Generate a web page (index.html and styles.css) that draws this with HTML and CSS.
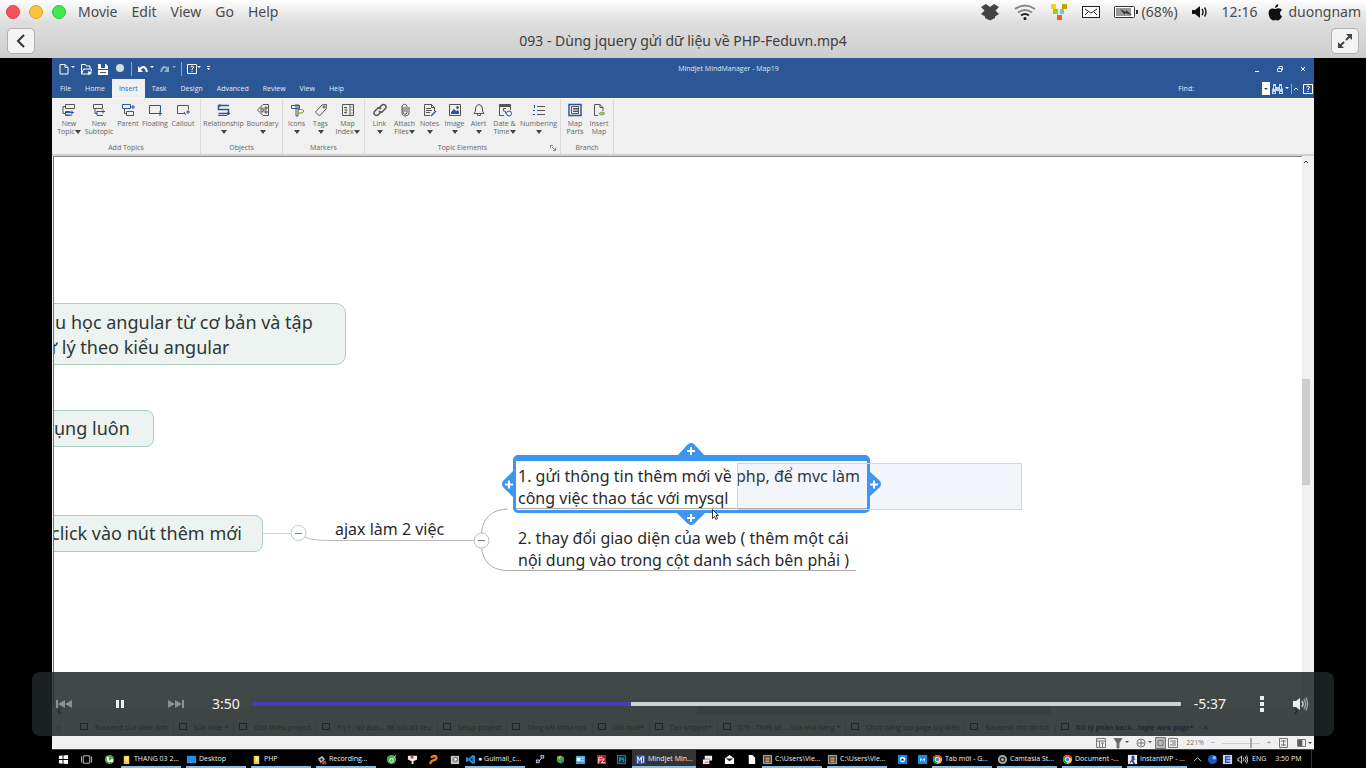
FILE: index.html
```html
<!DOCTYPE html>
<html lang="vi">
<head>
<meta charset="utf-8">
<title>093 - Dùng jquery gửi dữ liệu về PHP-Feduvn.mp4</title>
<link rel="stylesheet" href="styles.css">
</head>
<body>
<header class="menubar">
  <div class="lights"><button class="light close" aria-label="Close"></button><button class="light minimize" aria-label="Minimize"></button><button class="light maximize" aria-label="Zoom"></button></div>
  <nav class="menus"><button>Movie</button><button>Edit</button><button>View</button><button>Go</button><button>Help</button></nav>
  <div class="indicators">
    <svg width="20" height="18" viewBox="0 0 20 18"><path fill="#444" d="M6 1l4 3 4-3 5 3-3.500 3.500L19 11l-4 2.500v1.500l-5 2.500-5-2.500v-1.500L1 11l3.500-3.500L1 4z"/></svg>
    <svg width="22" height="16" viewBox="0 0 22 16" fill="none" stroke-width="2"><path stroke="#888" d="M1 5q10-7 20 0M4 8.500q7-5 14 0"/><path stroke="#222" d="M7 11.500q4-3 8 0"/><circle cx="11" cy="14.500" r="1.500" fill="#111"/></svg>
    <svg width="18" height="16" viewBox="0 0 18 16"><path fill="none" stroke="#ccc" d="M3 3l6 10 6-10"/><path fill="#fcd116" d="M1 0h5v5H1z"/><path fill="#c8a000" d="M12 0h5v5h-5z"/><path fill="#98cc20" d="M3 5h5v5H3z"/><path fill="#70c4dc" d="M10 5h4v5h-4z"/><path fill="#f26010" d="M7 11h5v5H7z"/></svg>
    <svg width="18" height="12" viewBox="0 0 18 12" fill="#fafafa" stroke="#222"><rect x=".5" y=".5" width="17" height="11"/><path fill="none" d="M3 3l6 4 6-4M3 9l3-3M15 9l-3-3"/></svg>
    <span class="battery"><svg width="24" height="12" viewBox="0 0 24 12"><rect x=".5" y=".5" width="20" height="11" rx="1" fill="#fff" stroke="#333"/><path fill="#999" d="M2 2h15v8H2z"/><path fill="#333" d="M22 4h2v4h-2zM6 3l6 3 0-2 6 5-7-2v2z"/></svg>(68%)</span>
    <svg width="16" height="12" viewBox="0 0 16 12"><path fill="#111" d="M0 4h3l5-4v12L3 8H0z"/><path fill="none" stroke="#222" stroke-width="1.500" d="M10 3q2 3 0 6M12.500 1.500q3 4.500 0 9"/></svg>
    <span>12:16</span>
    <span class="user"><svg width="15" height="17" viewBox="0 0 15 17"><path fill="#111" d="M10 0q1 3-3 4 0-3 3-4zM7.500 5Q12 3 14 6q-4 3 0 6.500Q11 18 8 16q-2 0-3 .5Q1 15 .500 9 1 3 7.500 5z"/></svg>duongnam</span>
  </div>
</header>
<div class="titlebar">
  <button class="tool" aria-label="Back"><svg width="10" height="14" viewBox="0 0 10 14" fill="none" stroke="#333" stroke-width="2"><path d="M8 1L2 7l6 6"/></svg></button>
  <h1>093 - Dùng jquery gửi dữ liệu về PHP-Feduvn.mp4</h1>
  <button class="tool" aria-label="Full screen"><svg width="14" height="14" viewBox="0 0 14 14" fill="#444" stroke="#444" stroke-width="2"><path stroke="none" d="M8 0h6v6zM0 8v6h6z"/><path d="M8 6l4-4M6 8l-4 4"/></svg></button>
</div>

<main class="stage">
  <section class="screen" aria-label="Mindjet MindManager">
    <div class="apphead">
      <div class="quick">
        <button aria-label="New"><svg width="17" height="12" viewBox="0 0 17 12" fill="none" stroke="#fff"><path d="M2 1.500h5l3 3v6.500H2zM7 1.500v3h3"/><path class="w" d="M13 3h4l-2 2z"/></svg></button>
        <button aria-label="Open"><svg width="12" height="12" viewBox="0 0 12 12" fill="none" stroke="#fff"><path d="M1.500 11V1.500h4l1 1.500H10v3M1.500 11l2-5h8l-1 5z"/><path class="w" d="M8 8l4 2-4 2z"/></svg></button>
        <button aria-label="Save"><svg width="12" height="12" viewBox="0 0 12 12"><path class="w" d="M1 1h8l2 2v9H1zM4 1v4h4V1z" fill-rule="evenodd"/><path stroke="#2b5797" d="M1 6.500h10M3 9.500h6"/></svg></button>
        <button aria-label="Record"><svg width="12" height="12" viewBox="0 0 12 12"><circle cx="6" cy="5" r="4" fill="#d0e0d8"/></svg></button>
        <i></i>
        <button aria-label="Undo"><svg width="17" height="12" viewBox="0 0 17 12" fill="none" stroke="#fff" stroke-width="2"><path d="M3 6q5-5 7 3"/><path class="w" stroke="none" d="M1 3v6h5zM13 3h4l-2 2z"/></svg></button>
        <button class="dim" aria-label="Redo"><svg width="17" height="12" viewBox="0 0 17 12" fill="none" stroke="#fff" stroke-width="2"><path d="M2 9q2-8 7-3"/><path class="w" stroke="none" d="M10 3v6H5zM13 3h4l-2 2z"/></svg></button>
        <i></i>
        <button aria-label="Help"><svg width="14" height="12" viewBox="0 0 14 12" fill="none" stroke="#fff"><path d="M.5 1.500h9v9H.5zM3.500 4q1.500-2 3 0 0 1-1.500 2v1M5 8v1"/><path class="w" d="M10 3h4l-2 2z"/></svg></button>
        <button aria-label="More"><svg width="6" height="8" viewBox="0 0 6 8"><path class="w" d="M1 1h3v1H1zM1 3h3L2.500 5z"/></svg></button>
      </div>
      <span class="apptitle">Mindjet MindManager - Map19</span>
      <div class="winbtns">
        <button aria-label="Minimize"><svg width="8" height="8" viewBox="0 0 8 8"><path stroke="#fff" d="M2 6.500h4"/></svg></button>
        <button aria-label="Restore"><svg width="8" height="8" viewBox="0 0 8 8"><path fill="none" stroke="#fff" stroke-width=".8" d="M1.500 3.500h4v3h-4zM3 3V1.500h3.500V5H6"/></svg></button>
        <button aria-label="Close"><svg width="8" height="8" viewBox="0 0 8 8"><path stroke="#fff" d="M2 2l4 4M6 2L2 6"/></svg></button>
      </div>
    </div>
    <div class="tabrow">
      <nav class="tabs"><button>File</button><button>Home</button><button class="on">Insert</button><button>Task</button><button>Design</button><button>Advanced</button><button>Review</button><button>View</button><button>Help</button></nav>
      <div class="find">
        <label for="find">Find:</label><input id="find" type="text">
        <svg width="52" height="14" viewBox="0 0 52 14" fill="none" stroke="#fff"><path fill="#fff" stroke="none" d="M0 0h8v13H0z"/><path fill="#444" stroke="none" d="M2 6h4L4 8z"/><path fill="#c8d6ec" stroke="none" d="M11 2h3v3h3V2h3v4l1 1v5h-4V9h-3v3h-4V7l1-1z"/><path stroke="#2b5797" d="M11 10.500h2M18 10.500h2M12.500 4v3M18.500 4v3"/><path class="w" stroke="none" d="M23 5h4l-2 2z"/><path stroke="#8aa5d0" d="M29.500 2v10"/><path d="M32 8l2-2 2 2M41.500 2.500h9v9h-9zM44.500 5q1.500-2 3 0 0 1-1.500 2v1M46 9v1"/></svg>
      </div>
    </div>
    <div class="ribbon">
      <div class="group g1">
        <div class="btns">
          <button class="w30"><svg viewBox="0 0 14 14"><path d="M3.500 1.500h9v4h-9zM3 3.500H1v7h2M8 12.500H3.500v-4h5"/><path class="b" d="M4 9.500h8M10 7.500v4M4 12h6"/></svg>New<br>Topic<b></b></button>
          <button class="w30"><svg viewBox="0 0 14 14"><path d="M1.500 1.500h9v4h-9zM3 5.500v5h2"/><path class="b" d="M5 8.500h8M11 6.500v4M5 8v4.500h6"/></svg>New<br>Subtopic</button>
          <button class="w28"><svg viewBox="0 0 14 14"><path class="b" d="M1.500 1.500h8v4h-8zM12 2v4M10 4h4"/><path d="M3.500 6v4.500H5M5.500 8.500h7v4h-7z"/></svg>Parent</button>
          <button class="w26"><svg viewBox="0 0 14 14"><path class="b" d="M1.500 2.500h11v7M12 10.500H1.500v-8M12 8v5M10 10.500h4"/></svg>Floating</button>
          <button class="w30"><svg viewBox="0 0 14 14"><path d="M9 10.500H1.500v-8h11v4M8 9l2 3"/><path class="b" d="M12 7v4M10 9h4"/></svg>Callout</button>
        </div><span>Add Topics</span>
      </div>
      <div class="group g2">
        <div class="btns">
          <button class="w42"><svg viewBox="0 0 14 14"><path class="b" stroke-width="1.500" d="M12 2.500H1.500v4h10v4H1.500"/><path d="M3 1v3M10 9l3 1.500-3 1.500M1 12.500h9"/></svg>Relationship<br><b></b></button>
          <button class="w36"><svg viewBox="0 0 14 14"><path d="M12.500 1.500H7L1.500 7 7 12.500h5.500zM5 5h2v4H5zM9 4h2v2H9zM9 8h2v2H9zM7 7h2"/></svg>Boundary<br><b></b></button>
        </div><span>Objects</span>
      </div>
      <div class="group g3">
        <div class="btns">
          <button class="w24"><svg viewBox="0 0 14 14"><path class="b" d="M1.500 2.500h8v3h-8z"/><path d="M6 1v12M8 1v12M6 13h2"/><path class="g" d="M8 6.500h4l2 1.500-2 2H8"/></svg>Icons<br><b></b></button>
          <button class="w24"><svg viewBox="0 0 14 14"><path d="M1.500 9L8 2l4.500-.5L12 6l-6.500 7z"/><circle cx="10" cy="4" r="1"/></svg>Tags<br><b></b></button>
          <button class="w30"><svg viewBox="0 0 14 14"><path d="M1.500 1.500h11v11h-11zM9 2v10M3 4.500h3M3 9.500h3M10.500 4h1M10.500 7h1M10.500 10h1"/><path class="g" d="M3 7h4M5 5v6"/></svg>Map<br>Index<b></b></button>
        </div><span>Markers</span>
      </div>
      <div class="group g4">
        <div class="btns">
          <button class="w26"><svg viewBox="0 0 14 14"><path stroke-width="1.500" d="M6 5l3-3q2-1 3.500.5T12 6L9 9Q7 9.500 6 8M8 9l-3 3q-2 1-3.500-.5T2 8l3-3q2-.5 3 1"/></svg>Link<br><b></b></button>
          <button class="w24"><svg viewBox="0 0 14 14"><path d="M5 4v6q2 3 4 0V3Q7-.5 4 3v8q3 4 7 0V4M7 4v5"/></svg>Attach<br>Files<b></b></button>
          <button class="w26"><svg viewBox="0 0 14 14"><path d="M7 12.500H1.500v-11h7l3 3V8M8.500 1.500v3h3M3 5.500h5M3 7.500h6M3 9.500h4"/><path class="b" stroke-width="1.500" d="M13 8l-5 5"/></svg>Notes<br><b></b></button>
          <button class="w24"><svg viewBox="0 0 14 14"><path d="M1.500 1.500h11v11h-11z"/><path fill="#2b579a" stroke="none" d="M3 11V9l3-3 2 2 2-1 1 2v2z"/><circle cx="9.500" cy="4.500" r="1" fill="#2b579a"/></svg>Image<br><b></b></button>
          <button class="w24"><svg viewBox="0 0 14 14"><path d="M2 10.500h10L10.500 8V5Q10 2 7 1.500 4 2 3.500 5v3zM5.500 11v1.500h3V11"/></svg>Alert<br><b></b></button>
          <button class="w28"><svg viewBox="0 0 14 14"><path d="M6 12.500H1.500v-11h11V7M8 5.500H5.500V8q3-.5 2 2.500"/><path stroke-width="2" d="M1 3h12"/><circle class="b" cx="11" cy="10.500" r="2.500"/></svg>Date &amp;<br>Time<b></b></button>
          <button class="w40"><svg viewBox="0 0 14 14"><path d="M5 3.500h8M5 7.500h8M5 11.500h8"/><path class="b" d="M2.500 2v3M1 7.500h2M1 11.500h2"/></svg>Numbering<br><b></b></button>
        </div><span>Topic Elements</span>
        <svg class="launch" viewBox="0 0 6 6"><path d="M.5 3V.5H3M2 2l3 3M5.500 3v2.500H3"/></svg>
      </div>
      <div class="group g5">
        <div class="btns">
          <button class="w24"><svg viewBox="0 0 14 14"><path class="b" stroke-width="1.500" d="M1 1.500h12v11H1z"/><path d="M3.500 3.500h7v7h-7zM5 5.500h5M5 7h5M5 8.500h5"/></svg>Map<br>Parts</button>
          <button class="w24"><svg viewBox="0 0 14 14"><path d="M6 12.500H2.500v-11H8l3 3V8M8 1.500v3h3"/><path class="g" d="M7 10.500q3-3 6 0-3 3-6 0zM10 10v1"/></svg>Insert<br>Map</button>
        </div><span>Branch</span>
      </div>
    </div>

    <div class="work">
      <div class="map">
        <div class="topic box big">au học angular từ cơ bản và tập<br>ử lý theo kiểu angular</div>
        <div class="topic box mid">ụng luôn</div>
        <div class="topic box low">click vào nút thêm mới</div>
        <svg class="links" width="900" height="500" viewBox="54 157 900 500" fill="none">
          <path stroke="#c4ddd2" d="M263 533.500h28"/>
          <path stroke="#bbb" d="M305 537q6 3.500 24 3.500h145"/>
          <path stroke="#aaa" d="M481.500 533q2-23 26-24M481.500 547q2 22 24 23.500H856"/>
          <circle cx="298.500" cy="533" r="7.500" fill="#fff" stroke="#b8d0c6"/><path stroke="#888" d="M295 533.500h7"/>
          <circle cx="481.500" cy="540.500" r="7.500" fill="#fff" stroke="#bbb"/><path stroke="#777" d="M478 540.500h7"/>
        </svg>
        <div class="topic ajax">ajax làm 2 việc</div>
        <div class="topic first">1. gửi thông tin thêm mới về php, để mvc làm<br>công việc thao tác với mysql</div>
        <div class="topic second">2. thay đổi giao diện của web ( thêm một cái<br>nội dung vào trong cột danh sách bên phải )</div>
        <div class="ghost"></div>
        <svg class="links" width="900" height="500" viewBox="54 157 900 500">
          <path fill="#3e96ef" d="M677 456l11-12q3-2 6 0l11 12zM677 513l11 11q3 2 6 0l11-11zM514 470l-11 11q-2 3 0 6l11 11zM868 470l12 11q2 3 0 6l-12 11z"/>
          <path stroke="#fff" stroke-width="2" d="M687 451h8M691 447v8M687 518h8M691 514v8M505 484.500h8M509 480.500v8M870 484.500h8M874 480.500v8"/>
          <path fill="#fff" stroke="#333" d="M712.500 509.500v9l2-2 1.500 3 1.500-1-1.500-3h2.500z"/>
        </svg>
      </div>
      <div class="vscroll"><svg width="8" height="8" viewBox="0 0 8 8"><path fill="none" stroke="#444" d="M2 5l2-2 2 2"/></svg><i></i></div>
    </div>
    <div class="hscroll"><span>‹</span><i></i><span>›</span></div>
    <div class="docs">
      <em>◁</em><a href="#">Backend của slide ảnh</a><a href="#">Sửa slide *</a><a href="#">Giới thiệu project</a><a href="#">Pη 1 : sử dụn... để lưu dữ liệu</a><a href="#">Setup project</a><a href="#">Tổng kết khóa học</a><a href="#">Gửi mail*</a><a href="#">Tạo snippet*</a><a href="#">079 - Thiết kế ... của nhà hàng *</a><a href="#">Chức năng tạo page tùy biến</a><a href="#">Backend cho tin tức</a><a href="#" class="on">Xử lý phần back...ingle web page*</a><em>▫ ✕</em>
    </div>
    <div class="status">
      <div class="views">
        <svg width="60" height="12" viewBox="0 0 60 12" fill="none" stroke="#777"><path d="M1.500 1.500h9v9h-9zM1 4h9M4.500 4v6M6 6h3M7.500 6v4"/><path fill="#666" d="M19 1.500h8l-3 4.500v5h-2V6z"/><path fill="#555" stroke="none" d="M30 4h4l-2 2zM53 4h4l-2 2z"/><circle cx="46" cy="6" r="4"/><path d="M46 3v6M43 6h6"/></svg>
        <svg width="24" height="12" viewBox="0 0 24 12" fill="none" stroke="#777"><path fill="#bbb" d="M.5.500h10v11H.500z"/><path d="M3 3.500h5v5H3zM13.500 1.500h9v9h-9zM15 4h6M17 6h4M15 8h6"/></svg>
      </div>
      <span>221%</span><span>−</span><i class="zoom"></i><span>+</span>
      <svg width="34" height="12" viewBox="0 0 34 12" fill="none" stroke="#777"><path d="M1.500 1.500h8v9h-8zM3 4h2M6 4h2M3 8h2M6 8h2M5.500 3v6"/><path d="M19.500 2.500h8v7h-8z"/><path fill="#555" d="M20 3h4v6h-4z"/><path fill="#444" stroke="none" d="M30 5h4l-2 2z"/></svg>
    </div>
    <div class="taskbar">
      <div class="pins start">
        <svg viewBox="0 0 12 12"><path fill="#fff" d="M1 2l4-.5v4H1zM6 1.500L11 1v4.500H6zM1 6.500h4v4L1 10zM6 6.500h5V11l-5-.5z"/></svg>
        <svg viewBox="0 0 12 12" fill="none" stroke="#ccc"><path d="M2.500 2h7v8h-7zM1 3H.5v6H1M11 3h.5v6H11"/></svg>
        <svg viewBox="0 0 12 12"><circle cx="6" cy="6" r="5" fill="#5ca850"/><path fill="none" stroke="#fff" stroke-width="2" d="M4 3q0 5 2 5t3-2v3"/></svg>
      </div>
      <button><svg viewBox="0 0 12 12"><path fill="#f6c84c" d="M3 2h6v9H3z"/><path fill="#ffe89c" d="M5 3h3v5H5z"/></svg>THANG 03 2...</button>
      <button><svg viewBox="0 0 12 12"><path fill="#2090f0" d="M1 2h10v7H1z"/><path fill="#60b8ff" d="M1 9h10v1H1z"/></svg>Desktop</button>
      <button><svg viewBox="0 0 12 12"><path fill="#f6c84c" d="M3 2h6v9H3z"/><path fill="#ffe89c" d="M5 3h3v5H5z"/></svg>PHP</button>
      <button><svg viewBox="0 0 12 12"><path fill="#999" d="M2 5l5-3 3 4-5 4z"/><circle cx="6" cy="6" r="2" fill="#333" stroke="#ddd"/><path stroke="#d33" stroke-width="2" d="M7 8l4 3M11 8l-4 3"/></svg>Recording...</button>
      <div class="pins p84">
        <svg viewBox="0 0 12 12"><circle cx="6" cy="6" r="5" fill="#4caf50"/><circle cx="6" cy="7" r="2" fill="none" stroke="#fff"/><path stroke="#cfe8c0" d="M8 5l3-4"/></svg>
        <svg viewBox="0 0 12 12"><path fill="#eee" d="M1 2h10v4L7 8v3H5V8L1 6z"/><path fill="#c44" d="M4 2h3v3H4z"/></svg>
        <svg viewBox="0 0 12 12"><path fill="none" stroke="#f47a18" stroke-width="2.500" d="M3 4q4-3 6-1 1 3-3 4-4 1-3 4"/></svg>
        <svg viewBox="0 0 12 12"><path fill="#d8c0a0" d="M2 2h9v9H2z"/><circle cx="7" cy="6" r="3" fill="#4690cc"/><path fill="#fff" d="M6 4l3 2-3 2z"/></svg>
      </div>
      <button><svg viewBox="0 0 12 12"><path fill="#2489ca" d="M8 1l3 1v8l-3 1-4-4-2 2-1-1V4l1-1 2 2zM8 4L6 6l2 2z" fill-rule="evenodd"/></svg>● Guimail_c...</button>
      <div class="pins p102">
        <svg viewBox="0 0 12 12"><path fill="#bbb" d="M6 1h4v4H6zM1 6h4v4H1z"/><path stroke="#e8d840" d="M8 4L4 8"/><path fill="#2838a8" d="M7 2h2v2H7zM2 7h2v2H2z"/></svg>
        <svg viewBox="0 0 12 12"><circle cx="6" cy="6" r="4" fill="#38a848"/><path fill="#f0b020" d="M2 3l5-1-2 4z"/><path fill="#3880d8" d="M6 6l4 2-4 3z"/></svg>
        <svg viewBox="0 0 12 12"><path fill="#48a0e0" d="M1 2h10v9H1z"/><path fill="#fff" d="M2 4h4v4H2zM7 4h3v1H7zM7 7h3v1H7z"/></svg>
        <svg viewBox="0 0 12 12"><path fill="#b81818" d="M1 1h10v10H1z"/><path fill="none" stroke="#fff" d="M3 10V3.500h4M3 6.500h3M6 5.500h3L6 9.500h4"/></svg>
        <svg viewBox="0 0 12 12"><path fill="#082838" stroke="#1890b8" d="M1.500 1.500h9v9h-9z"/><path fill="none" stroke="#1ca8d8" d="M4 9V4h1.500v2.500H4M9 4.500H7V6h1.500v2H7"/></svg>
      </div>
      <button class="on"><svg viewBox="0 0 12 12"><path fill="#3050a0" d="M1 1h10v10H1z"/><path fill="none" stroke="#fff" d="M3 10V3l2 4 2-4v7M8 3h1.500v6H8"/></svg>Mindjet Min...</button>
      <div class="pins p66">
        <svg viewBox="0 0 12 12"><path fill="#eee" d="M3 2h8v5H3zM1 6h7v5H1z"/><path fill="none" stroke="#888" d="M3 5.500h5.500V7"/><path stroke="#c44" d="M3 9h4"/></svg>
        <svg viewBox="0 0 12 12"><path fill="#fff" d="M6 1l5 4v6H1V5z"/><path fill="#222" d="M2 5h8L6 8z"/></svg>
        <svg viewBox="0 0 12 12"><path fill="#fff" d="M3 1h4l3 3v7H3z"/></svg>
      </div>
      <button><svg viewBox="0 0 12 12"><path fill="#555" stroke="#bbb" d="M1.500 1.500h9v9h-9z"/><path stroke="#e89050" stroke-width="2" d="M4 5h4M4 8h4"/></svg>C:\Users\Vie...</button>
      <button><svg viewBox="0 0 12 12"><path fill="#555" stroke="#bbb" d="M1.500 1.500h9v9h-9z"/><path stroke="#e89050" stroke-width="2" d="M4 5h4M4 8h4"/></svg>C:\Users\Vie...</button>
      <div class="pins p40">
        <svg viewBox="0 0 12 12"><path fill="#0a84f0" d="M1 1h10v10H1z"/><circle cx="6" cy="6" r="3" fill="#fff"/><path stroke="#0a84f0" d="M4 7l2-2 2 2"/></svg>
        <svg viewBox="0 0 12 12"><path fill="#1a8ae8" d="M1 1h10v10H1z"/><path fill="none" stroke="#fff" d="M4 8V5l2 2 2-2v3"/></svg>
      </div>
      <button><svg viewBox="0 0 12 12"><circle cx="6" cy="6" r="5" fill="#f4c20d"/><path fill="#db4437" d="M6 6L1.500 4a5 5 0 0 1 9 0z"/><path fill="#0f9d58" d="M6 6L1.500 4a5 5 0 0 0 4 7z"/><circle cx="6" cy="6" r="2.500" fill="#4285f4" stroke="#fff"/></svg>Tab mới - G...</button>
      <button><svg viewBox="0 0 12 12"><circle cx="6" cy="6" r="4" fill="#333" stroke="#aaa" stroke-width="2"/><circle cx="6" cy="6" r="1.500" fill="#9c8"/></svg>Camtasia St...</button>
      <button><svg viewBox="0 0 12 12"><circle cx="6" cy="6" r="5" fill="#f4c20d"/><path fill="#db4437" d="M6 6L1.500 4a5 5 0 0 1 9 0z"/><path fill="#0f9d58" d="M6 6L1.500 4a5 5 0 0 0 4 7z"/><circle cx="6" cy="6" r="2.500" fill="#4285f4" stroke="#fff"/></svg>Document -...</button>
      <button><svg viewBox="0 0 12 12"><path fill="#eee" d="M1 1h10v10H1z"/><path fill="#2a4a98" d="M5 2h3v3l1 1-2 1 2 4H7L5 8l-2 3V9l2-3z"/></svg>InstantWP - ...</button>
      <div class="tray">
        <svg viewBox="0 0 12 12"><path fill="none" stroke="#ddd" d="M2 8l4-4 4 4"/></svg>
        <svg viewBox="0 0 12 12"><circle cx="6" cy="6" r="5" fill="#1858c8"/><circle cx="8" cy="4" r="2" fill="#80b8f8"/></svg>
        <svg viewBox="0 0 12 12"><path fill="#c8d4f0" d="M1 1h10v10H1z"/><path fill="none" stroke="#4050b0" stroke-width="1.500" d="M9 3H4v6h5M4 6h5"/></svg>
        <svg viewBox="0 0 12 12" fill="none" stroke="#ddd"><path d="M1 4.500h1.500L5 2v8L2.500 7.500H1zM7 4q1 2 0 4M9 3q2 3 0 6M10.500 1.500q2.500 4.500 0 9"/></svg>
        <span>ENG</span><span>3:50 PM</span>
      </div>
    </div>
  </section>

  <div class="player">
    <button aria-label="Previous"><svg width="16" height="8" viewBox="0 0 16 8"><path fill="#8c8f8f" d="M0 0h2v8H0zM9 0v8L2 4zM16 0v8L9 4z"/></svg></button>
    <button aria-label="Pause"><svg width="8" height="8" viewBox="0 0 8 8"><path fill="#eee" d="M0 0h3v8H0zM5 0h3v8H5z"/></svg></button>
    <button aria-label="Next"><svg width="16" height="8" viewBox="0 0 16 8"><path fill="#8c8f8f" d="M0 0l7 4-7 4zM7 0l7 4-7 4zM14 0h2v8h-2z"/></svg></button>
    <span class="time">3:50</span>
    <input type="range" min="0" max="567" value="230" aria-label="Position">
    <span class="left">-5:37</span>
    <button aria-label="Options"><svg width="4" height="16" viewBox="0 0 4 16"><path fill="#eee" d="M0 0h4v4H0zM0 6h4v4H0zM0 12h4v4H0z"/></svg></button>
    <button class="vol" aria-label="Volume"><svg width="16" height="14" viewBox="0 0 16 14"><path fill="#eee" d="M0 4h3l4-3v12l-4-3H0z"/><path fill="none" stroke="#ccc" stroke-width="1.500" d="M9 4q2 3 0 6"/><path fill="none" stroke="#999" stroke-width="1.500" d="M11 2q3 5 0 10M13 .5q3 6.500 0 13"/></svg></button>
  </div>
</main>
</body>
</html>
```
FILE: styles.css
```css
* { box-sizing: border-box; }
body {
  margin: 0;
  height: 100vh;
  display: flex;
  flex-direction: column;
  overflow: hidden;
  background: #000;
  font-family: "Noto Sans", "Open Sans", sans-serif;
}
button {
  margin: 0;
  padding: 0;
  border: 0;
  background: none;
  font: inherit;
  color: inherit;
}
svg { display: block; flex: none; }
.w { fill: #fff; stroke: none; }

/* desktop menu bar */
.menubar {
  height: 24px;
  display: flex;
  align-items: center;
  padding: 0 5px 0 6px;
  background: linear-gradient(#fdfdfd, #dcdcdc);
  color: #4a4a4a;
  font-size: 14px;
  line-height: 20px;
}
.lights { display: flex; gap: 9px; }
.light { width: 14px; height: 14px; border-radius: 50%; border: 1px solid; }
.close { background: #f4515a; border-color: #d9404a; }
.minimize { background: #fcc438; border-color: #dba42a; }
.maximize { background: #3fe94c; border-color: #2cc23a; }
.menus { display: flex; gap: 14px; margin-left: 12px; flex: 1; }
.indicators { display: flex; align-items: center; gap: 14px; }
.battery, .user { display: flex; align-items: center; gap: 4px; }
.user { gap: 5px; margin-left: -3px; }

.titlebar {
  height: 34px;
  display: flex;
  align-items: center;
  justify-content: space-between;
  padding: 0 7px;
  background: linear-gradient(#dedede, #cdcdcd);
  color: #3c3c3c;
}
.titlebar h1 { margin: 0; font-size: 14px; line-height: 20px; font-weight: 400; }
.tool {
  width: 28px;
  height: 26px;
  display: flex;
  align-items: center;
  justify-content: center;
  border: 1px solid #b0b0b0;
  border-radius: 5px;
  background: #f4f4f4;
}

/* video area */
.stage { flex: 1; min-height: 0; display: flex; position: relative; padding: 0 52px; }
.screen {
  flex: 1;
  min-width: 0;
  display: flex;
  flex-direction: column;
  background: #f0f0f0;
  font-family: "Open Sans", "Noto Sans", sans-serif;
  font-size: 7px;
  line-height: 8px;
}
.apphead {
  height: 21px;
  display: grid;
  grid-template-columns: 1fr auto 1fr;
  align-items: center;
  background: #2b5797;
  color: #dfe8f5;
  padding: 0 7px 0 6px;
}
.quick { display: flex; align-items: center; gap: 5px; }
.quick i { width: 1px; height: 14px; background: #8aa5d0; }
.dim { opacity: .5; }
.apptitle { padding-left: 92px; }
.winbtns { display: flex; justify-content: flex-end; gap: 15px; }
.tabrow { height: 19px; display: flex; justify-content: space-between; background: #2b5797; color: #e4ecf7; }
.tabs { display: flex; padding-left: 1px; }
.tabs button { padding: 0 7px; }
.tabs .on { background: #f0f0f0; color: #2a6cc0; }
.find { display: flex; align-items: center; }
.find input { width: 68px; height: 12px; border: 0; padding: 0; background: none; font-size: 7px; color: #fff; }

.ribbon { height: 56px; display: flex; color: #666; border-top: 1px solid #fafafa; }
.group {
  display: flex;
  flex-direction: column;
  align-items: center;
  justify-content: space-between;
  position: relative;
  padding: 4px 0 2px;
  border-right: 1px solid #dadada;
}
.g1 { width: 149px; }
.g2, .g3 { width: 82px; }
.g4 { width: 196px; }
.g5 { width: 53px; }
.btns { display: flex; align-items: flex-start; }
.btns button {
  display: block;
  text-align: center;
  white-space: nowrap;
}
.group svg { width: 14px; height: 14px; margin: 0 auto 3px; fill: none; stroke: #555; }
.group .b { stroke: #2b579a; }
.group .g { stroke: #6a9a30; }
.group b {
  display: inline-block;
  border: 3px solid transparent;
  border-top: 4px solid #444;
  border-bottom: 0;
}
.group .launch { position: absolute; right: 4px; bottom: 3px; width: 6px; height: 6px; margin: 0; stroke: #888; }
.w24 { width: 24px; }
.w26 { width: 26px; }
.w28 { width: 28px; }
.w30 { width: 30px; }
.w36 { width: 36px; }
.w40 { width: 40px; }
.w42 { width: 42px; }

/* mind map */
.work {
  flex: 1;
  min-height: 0;
  display: flex;
  border-top: 2px solid #d0d0d0;
  padding: 0 4px 0 1px;
}
.map {
  flex: 1;
  position: relative;
  overflow: hidden;
  background: #fff;
  border-top: 1px solid #888;
  border-left: 1px solid #777;
  font-family: "Noto Sans", "Open Sans", sans-serif;
}
.topic { position: absolute; white-space: nowrap; font-size: 16px; line-height: 22px; color: #2a2a2a; }
.box {
  left: -20px;
  font-size: 18px;
  line-height: 25px;
  color: #2c3834;
  background: #edf3f1;
  border: 1px solid #a9cfc0;
  border-radius: 8px;
  padding: 5px 0 5px 16px;
}
.big { top: 146px; width: 312px; padding: 6px 0 4px 10px; border-radius: 10px; }
.mid { top: 253px; width: 120px; padding-left: 19px; }
.low { top: 358px; width: 229px; }
.links { position: absolute; left: 0; top: 0; }
.ajax { left: 281px; top: 361px; }
.first {
  left: 459px;
  top: 298px;
  width: 357px;
  padding: 4px 2px 1px;
  border: 3px solid #3e96ef;
  border-top-width: 6px;
  border-radius: 5px;
}
.first::after { content: ""; position: absolute; left: 0; right: 0; bottom: 1px; border-bottom: 1px solid #aaa; }
.second { left: 464px; top: 370px; }
.ghost { position: absolute; left: 683px; top: 306px; width: 285px; height: 47px; background: rgba(140, 165, 215, .11); border: 1px solid #ccd6e6; }
.vscroll { width: 8px; background: #f0f0f0; display: flex; flex-direction: column; padding-top: 2px; }
.vscroll i { height: 106px; margin-top: 213px; background: #cdcdcd; }

.hscroll { height: 14px; display: flex; padding: 0 16px 0 5px; color: #000; }
.hscroll i { width: 354px; margin: 0 auto 0 636px; background: #cdcdcd; height: 9px; }
.hscroll span { font-size: 14px; line-height: 8px; }
.docs { height: 16px; display: flex; align-items: center; white-space: nowrap; color: #444; padding-left: 3px; }
.docs em { font-style: normal; width: 20px; }
.docs a { color: inherit; text-decoration: none; padding: 0 5px 2px; border-right: 1px solid #bbb; }
.docs a::before { content: ""; display: inline-block; width: 6px; height: 5px; margin-right: 7px; border: 1px solid #234; }
.docs .on { color: #1c3f80; font-weight: 700; border: 0; }
.status { height: 13px; display: flex; align-items: center; justify-content: flex-end; gap: 7px; padding-right: 2px; color: #777; }
.views { display: flex; }
.zoom { width: 38px; height: 10px; background: linear-gradient(#aaa, #aaa) 28px 0 / 2px 10px no-repeat, linear-gradient(#ccc, #ccc) 0 5px / 38px 1px no-repeat; }

.taskbar { height: 19px; display: flex; align-items: stretch; background: #000; color: #eee; border-top: 1px solid #444; }
.taskbar svg { width: 11px; height: 11px; }
.pins { display: flex; align-items: center; justify-content: space-around; }
.start { width: 69px; }
.p84 { width: 84px; }
.p102 { width: 102px; }
.p66 { width: 66px; }
.p40 { width: 40px; }
.taskbar button {
  width: 60px;
  margin-right: 5px;
  padding-top: 2px;
  display: flex;
  align-items: center;
  gap: 2px;
  white-space: nowrap;
  overflow: hidden;
  border-bottom: 2px solid #84bce8;
}
.taskbar .on { width: 64px; margin: 0; padding-left: 3px; background: #333; }
.tray { flex: 1; display: flex; align-items: center; gap: 4px; border-right: 1px solid #333; margin-right: 2px; }
.tray span { padding-right: 5px; }

/* playback controls */
.player {
  position: absolute;
  left: 32px;
  right: 32px;
  bottom: 32px;
  height: 64px;
  display: flex;
  align-items: center;
  padding: 0 25px 0 24px;
  border-radius: 8px;
  background: rgba(32, 38, 38, .85);
  color: #f4f4f4;
  font-size: 14px;
  line-height: 20px;
}
.player button { width: 16px; margin-right: 40px; display: flex; justify-content: center; }
.player .time { width: 29px; margin-left: -12px; }
.player input {
  flex: 1;
  min-width: 0;
  height: 4px;
  margin: 0 13px 0 12px;
  appearance: none;
  border-radius: 1px;
  background: linear-gradient(90deg, #4d3bb8 40.7%, #d0cfcf 40.7%);
}
.player input::-webkit-slider-thumb { appearance: none; width: 1px; height: 4px; }
.player .left { margin-right: 28px; }
.player button:nth-of-type(4) { margin-right: 23px; }
.player .vol { margin: 0; }
```
